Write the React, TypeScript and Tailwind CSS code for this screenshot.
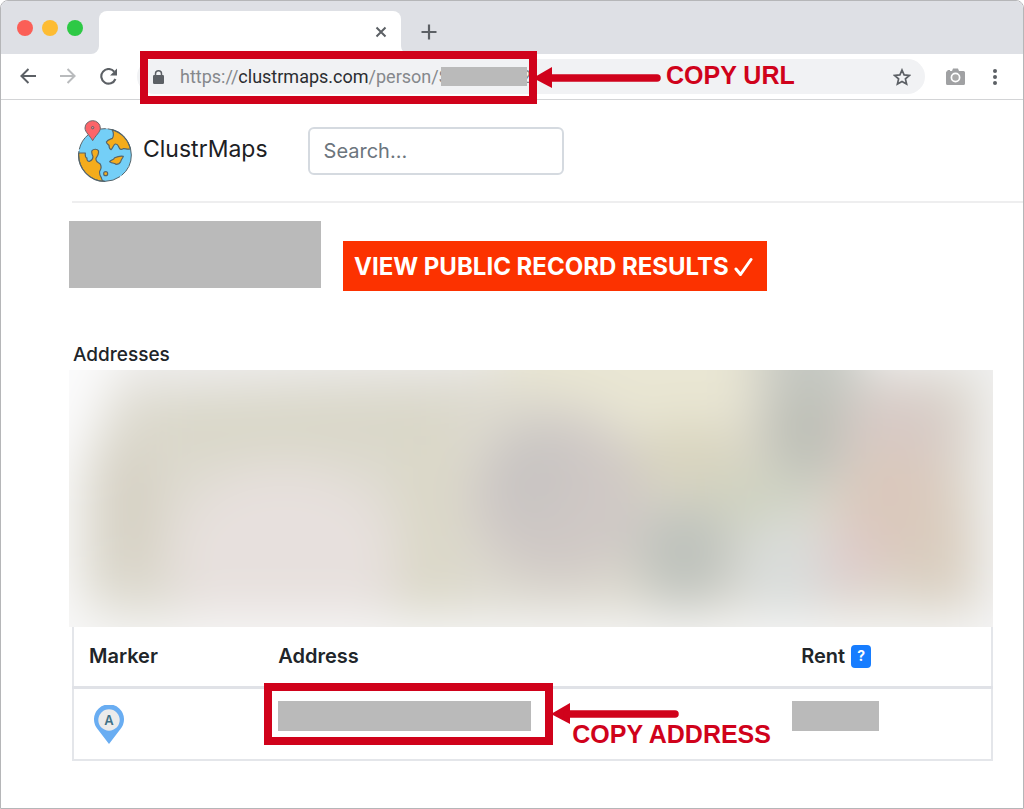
import React from 'react';

function GlobeLogo() {
  return (
    <svg viewBox="24 23 162 186" className="h-[62px] w-[54px] shrink-0" aria-hidden="true">
      <circle cx="105" cy="128" r="79" fill="#74cff7" />
      <g fill="#f4ac1c" stroke="#54646b" strokeWidth="3.5" strokeLinejoin="round">
        <path d="M26 122H46C45 132 47 136 51 137C50 144 54 148 59 147C65 144 69 139 69 133C66 126 64 119 66 115C71 109 82 110 85 115C88 124 83 131 78 138C77 144 81 150 90 154C95 162 94 170 89 177C87 186 91 191 94 196C95 202 99 207 104 207A79 79 0 0 1 26 122Z" />
        <path d="M126 52C133 62 130 74 127 78C119 81 112 83 109 89C110 95 115 96 117 99C117 105 120 111 123 112C129 108 130 97 136 95C145 94 144 101 149 109C152 114 157 110 160 109C166 108 174 113 181 109A79 79 0 0 0 126 52Z" />
        <path d="M119 148C124 142 130 144 134 136C141 133 151 130 160 132C158 138 154 140 152 148C149 154 143 156 138 156C135 152 128 154 119 148Z" />
        <circle cx="107" cy="184" r="6" />
      </g>
      <circle cx="105" cy="128" r="79" fill="none" stroke="#54646b" strokeWidth="3" strokeDasharray="70 5 110 4" />
      <path d="M68 85C60 70 45 60 45 47A23 22 0 0 1 91 47C91 60 76 70 68 85Z" fill="#fb6469" stroke="#6d6569" strokeWidth="3" />
      <circle cx="68" cy="46" r="3.5" fill="#ef8a8c" stroke="#54646b" strokeWidth="3" />
    </svg>
  );
}

function Arrow({ className }: { className: string }) {
  return (
    <svg viewBox="0 0 128 22" className={className} aria-hidden="true">
      <path d="M0 11L19 0V21Z" fill="#d0021b" />
      <path d="M16 11H124" stroke="#d0021b" strokeWidth="7.5" strokeLinecap="round" />
    </svg>
  );
}

function BlurredMap() {
  return (
    <svg viewBox="0 0 924 257" preserveAspectRatio="none" className="block h-[257px] w-full" role="img" aria-label="Map">
      <defs>
        <filter id="soft" filterUnits="userSpaceOnUse" x="-150" y="-150" width="1224" height="557" colorInterpolationFilters="sRGB">
          <feGaussianBlur stdDeviation="25" />
        </filter>
      </defs>
      <rect width="924" height="257" fill="#dddacf" />
      <g filter="url(#soft)">
        <rect x="-150" y="-150" width="1224" height="557" fill="#dddacf" />
        <rect x="90" y="30" width="290" height="50" fill="#d9d7c8" />
        <rect x="45" y="80" width="35" height="120" fill="#d3cdbf" />
        <ellipse cx="215" cy="190" rx="115" ry="95" fill="#e7e0dd" />
        <rect x="340" y="60" width="40" height="180" fill="#dad7c5" />
        <path d="M400-150H680V30L650 110H600L530 35L400 0Z" fill="#e9e6d3" />
        <ellipse cx="620" cy="90" rx="60" ry="36" fill="#d8d4bf" />
        <ellipse cx="490" cy="130" rx="88" ry="82" fill="#cfc8c5" />
        <ellipse cx="462" cy="105" rx="38" ry="50" fill="#c8c4c2" />
        <path d="M690-60H780L800 60L760 115H710Z" fill="#c5c8c2" />
        <ellipse cx="735" cy="60" rx="42" ry="42" fill="#bdbfb6" />
        <ellipse cx="690" cy="130" rx="52" ry="28" fill="#ced2c0" />
        <ellipse cx="616" cy="185" rx="48" ry="52" fill="#bec2bc" />
        <ellipse cx="715" cy="205" rx="45" ry="60" fill="#d9dcda" />
        <ellipse cx="830" cy="60" rx="60" ry="45" fill="#d7cac6" />
        <ellipse cx="825" cy="140" rx="60" ry="65" fill="#dac8bc" />
        <ellipse cx="780" cy="190" rx="25" ry="35" fill="#dfcbcc" />
        <rect x="850" y="140" width="45" height="90" fill="#dacdbe" />
        <path d="M-150-150H110L40 30L10 110V230L60 257V407H-150Z" fill="#fbfbfc" />
        <path d="M60-150H430V0L250 8L60 20Z" fill="#efeeee" />
        <rect x="-150" y="246" width="1224" height="161" fill="#f7f7f7" />
        <path d="M914 0H1074V407H914Z" fill="#f4f4f5" />
        <rect x="790" y="-150" width="284" height="152" fill="#efeff0" />
      </g>
    </svg>
  );
}

function TabStrip() {
  return (
    <div className="flex h-[53px] items-end bg-[#dee0e5]">
      <div className="mb-[18px] ml-4 flex gap-[9px]">
        <button aria-label="Close window" className="size-4 rounded-full bg-[#fb5f57]" />
        <button aria-label="Minimize window" className="size-4 rounded-full bg-[#fdbc33]" />
        <button aria-label="Maximize window" className="size-4 rounded-full bg-[#2dc945]" />
      </div>
      <div className="ml-2 flex h-[43px] items-end">
        <svg viewBox="0 0 8 8" className="size-2" aria-hidden="true"><path d="M8 0V8H0A8 8 0 0 0 8 0Z" fill="#fff" /></svg>
        <div className="flex h-full w-[302px] items-center justify-end rounded-t-lg bg-white pr-3.5 pb-0.5">
          <button aria-label="Close tab" className="size-3">
            <svg viewBox="0 0 12 12" className="size-3" stroke="#5c6065" strokeWidth="2"><path d="M1.500 1.500L10.500 10.500M10.500 1.500L1.500 10.500" /></svg>
          </button>
        </div>
        <svg viewBox="0 0 8 8" className="size-2" aria-hidden="true"><path d="M0 0V8H8A8 8 0 0 1 0 0Z" fill="#fff" /></svg>
      </div>
      <button aria-label="New tab" className="mb-3.5 ml-3 size-4">
        <svg viewBox="0 0 16 16" className="size-4" stroke="#5c6065" strokeWidth="2.2"><path d="M8 .5V15.500M.5 8H15.500" /></svg>
      </button>
    </div>
  );
}

function Toolbar() {
  return (
    <div className="flex h-[46px] items-center border-b border-[#d3d4d6] pr-[26px] pl-[19px]">
      <div className="flex gap-6">
        <button aria-label="Back" className="size-4">
          <svg viewBox="0 0 17 17" className="size-4" fill="none" stroke="#5c6065" strokeWidth="2.1"><path d="M17 8.5H2M9 1L1.5 8.5L9 16" /></svg>
        </button>
        <button aria-label="Forward" className="size-4">
          <svg viewBox="0 0 17 17" className="size-4" fill="none" stroke="#b9bbbd" strokeWidth="2.1"><path d="M0 8.5H15M8 1L15.5 8.5L8 16" /></svg>
        </button>
        <button aria-label="Reload" className="size-[17px]">
          <svg viewBox="0 0 17 17" className="size-[17px]"><path d="M14.2 3.6A7.300 7.300 0 1 0 15.400 11" fill="none" stroke="#5c6065" strokeWidth="2.1" /><path d="M17 .5V7.400H10.100Z" fill="#5c6065" /></svg>
        </button>
      </div>
      <div className="relative ml-5 flex h-[35px] flex-1 items-center rounded-full bg-[#f1f2f4] pr-3.5 pl-4">
        <svg viewBox="0 0 11 14" className="h-3.5 w-[11px] shrink-0" aria-hidden="true">
          <path d="M2.5 6V3.8A3 3 0 0 1 8.500 3.800V6" fill="none" stroke="#5c6065" strokeWidth="1.5" />
          <rect y="5" width="11" height="9" rx="1.2" fill="#5c6065" />
        </svg>
        <div className="ml-4 flex flex-1 items-center text-lg text-[#85888c]">
          <span>https://<span className="text-[#2b2d31]">clustrmaps.com</span>/person/S</span>
          <span className="z-10 -mr-1.5 -ml-2 h-[19px] w-[86px] bg-[#bababa]" />
          <span>2</span>
        </div>
        <button aria-label="Bookmark this page" className="size-[18px]">
          <svg viewBox="0 0 18 18" className="size-[18px]" fill="none" stroke="#5c6065" strokeWidth="1.7"><path d="M9 2L11.1 6.900L16.400 7.400L12.400 10.900L13.600 16.100L9 13.400L4.400 16.100L5.600 10.900L1.600 7.400L6.900 6.900Z" /></svg>
        </button>
        <div className="pointer-events-none absolute -top-2 left-[3px] flex h-[53px] items-center">
          <div className="h-full w-[397px] border-8 border-[#d0021b]" />
          <Arrow className="h-[22px] w-32 -ml-1" />
          <span className="ml-[5px] pb-1.5 text-[25px]/[30px] font-bold whitespace-nowrap text-[#d0021b] [font-family:'Liberation_Sans',Arial,sans-serif]">COPY URL</span>
        </div>
      </div>
      <button aria-label="Screenshot" className="ml-[21px] h-[17px] w-[19px]">
        <svg viewBox="0 0 19 17" className="h-[17px] w-[19px]"><path d="M1.500 2H4V3H6L7 .5H12L13 3H17.500Q19 3 19 4.500V15.500Q19 17 17.500 17H1.500Q0 17 0 15.500V4.500Q0 3 1.500 3Z" fill="#a0a1a3" /><circle cx="9.500" cy="9.500" r="4.100" fill="#aaa" stroke="#fff" strokeWidth="1.700" /></svg>
      </button>
      <button aria-label="Menu" className="ml-7 h-4 w-1">
        <svg viewBox="0 0 4 16" className="h-4 w-1" fill="#5c6065"><circle cx="2" cy="2" r="2" /><circle cx="2" cy="8" r="2" /><circle cx="2" cy="14" r="2" /></svg>
      </button>
    </div>
  );
}

function MarkerPin() {
  return (
    <svg viewBox="0 0 30 39" className="ml-[5px] h-[39px] w-[30px]" role="img" aria-label="Marker A">
      <path d="M15 39L3.500 24A15 15 0 1 1 26.500 24Z" fill="#69adf2" />
      <circle cx="15" cy="15" r="10.700" fill="#ebebeb" />
      <text x="15" y="20" textAnchor="middle" fontSize="13" fontWeight="600" fill="#3f7187" fontFamily="Inter, sans-serif">A</text>
    </svg>
  );
}

function AddressTable() {
  return (
    <table className="w-full table-fixed border-collapse border-2 border-t-0 border-[#e4e6ea]">
      <colgroup>
        <col className="w-[20.6%]" />
        <col className="w-[56.9%]" />
        <col className="w-[22.5%]" />
      </colgroup>
      <thead>
        <tr className="h-[60px] border-b-3 border-[#e0e2e7] text-left text-xl text-[#212529]">
          <th className="pl-[15px] font-semibold">Marker</th>
          <th className="pl-4 font-semibold">Address</th>
          <th className="pl-4 font-semibold">
            <span className="flex items-center gap-1.5">
              Rent
              <button aria-label="About rent" className="h-[23px] w-5 rounded bg-[#177dff] text-sm font-bold text-white">?</button>
            </span>
          </th>
        </tr>
      </thead>
      <tbody>
        <tr className="h-[73px] align-top">
          <td className="pt-4 pl-[15px]"><MarkerPin /></td>
          <td className="pt-3 pl-4">
            <div className="relative h-[30px] w-[253px] bg-[#bababa]">
              <div className="pointer-events-none absolute -top-[18px] -left-3.5 flex h-[62px] items-center">
                <div className="h-full w-[289px] border-8 border-[#d0021b]" />
                <Arrow className="h-[22px] w-32 -ml-0.5" />
              </div>
              <span className="pointer-events-none absolute top-[18px] left-[294px] text-[25px]/[30px] font-bold whitespace-nowrap text-[#d0021b] [font-family:'Liberation_Sans',Arial,sans-serif]">COPY ADDRESS</span>
            </div>
          </td>
          <td className="pt-3 pl-[7px]"><div className="h-[30px] w-[87px] bg-[#bababa]" /></td>
        </tr>
      </tbody>
    </table>
  );
}

export default function App() {
  return (
    <div className="flex min-h-screen flex-col overflow-hidden rounded-t-lg border border-[#b5b6b8] bg-white font-['Inter',sans-serif]">
      <div className="font-['Roboto',sans-serif]">
        <TabStrip />
        <Toolbar />
      </div>
      <div className="pl-[71px]">
        <header className="flex h-[103px] items-center border-b-2 border-[#eeeeef] pl-1.5">
          <a href="#" className="flex items-center gap-[11px] text-[23px]/8 text-[#1d2124]">
            <GlobeLogo />
            <span className="pb-1">ClustrMaps</span>
          </a>
          <input type="search" aria-label="Search" placeholder="Search..." className="ml-10 h-12 w-64 rounded-md border-2 border-[#d5dae0] px-3.5 text-xl text-[#495057] placeholder:text-[#6c757d]" />
        </header>
      </div>
      <main className="pr-[30px] pl-[68px]">
        <div className="flex items-start gap-[22px] pt-[18px]">
          <div className="h-[67px] w-[252px] bg-[#bababa]" />
          <button className="mt-5 flex h-[50px] items-center gap-1 bg-[#fc3200] pt-0.5 pr-3.5 pl-[11px] text-2xl font-bold whitespace-nowrap text-white">
            VIEW PUBLIC RECORD RESULTS
            <svg viewBox="0 0 20 20" className="size-5" fill="none" stroke="#fff" strokeWidth="3" strokeLinecap="round" strokeLinejoin="round" aria-hidden="true"><path d="M3 12L7.500 17.500L18 2.500" /></svg>
          </button>
        </div>
        <h2 className="mt-[50px] mb-px pl-1 text-[19px]/7 font-medium text-[#212529]">Addresses</h2>
        <BlurredMap />
        <div className="pl-[3px]">
          <AddressTable />
        </div>
      </main>
    </div>
  );
}
